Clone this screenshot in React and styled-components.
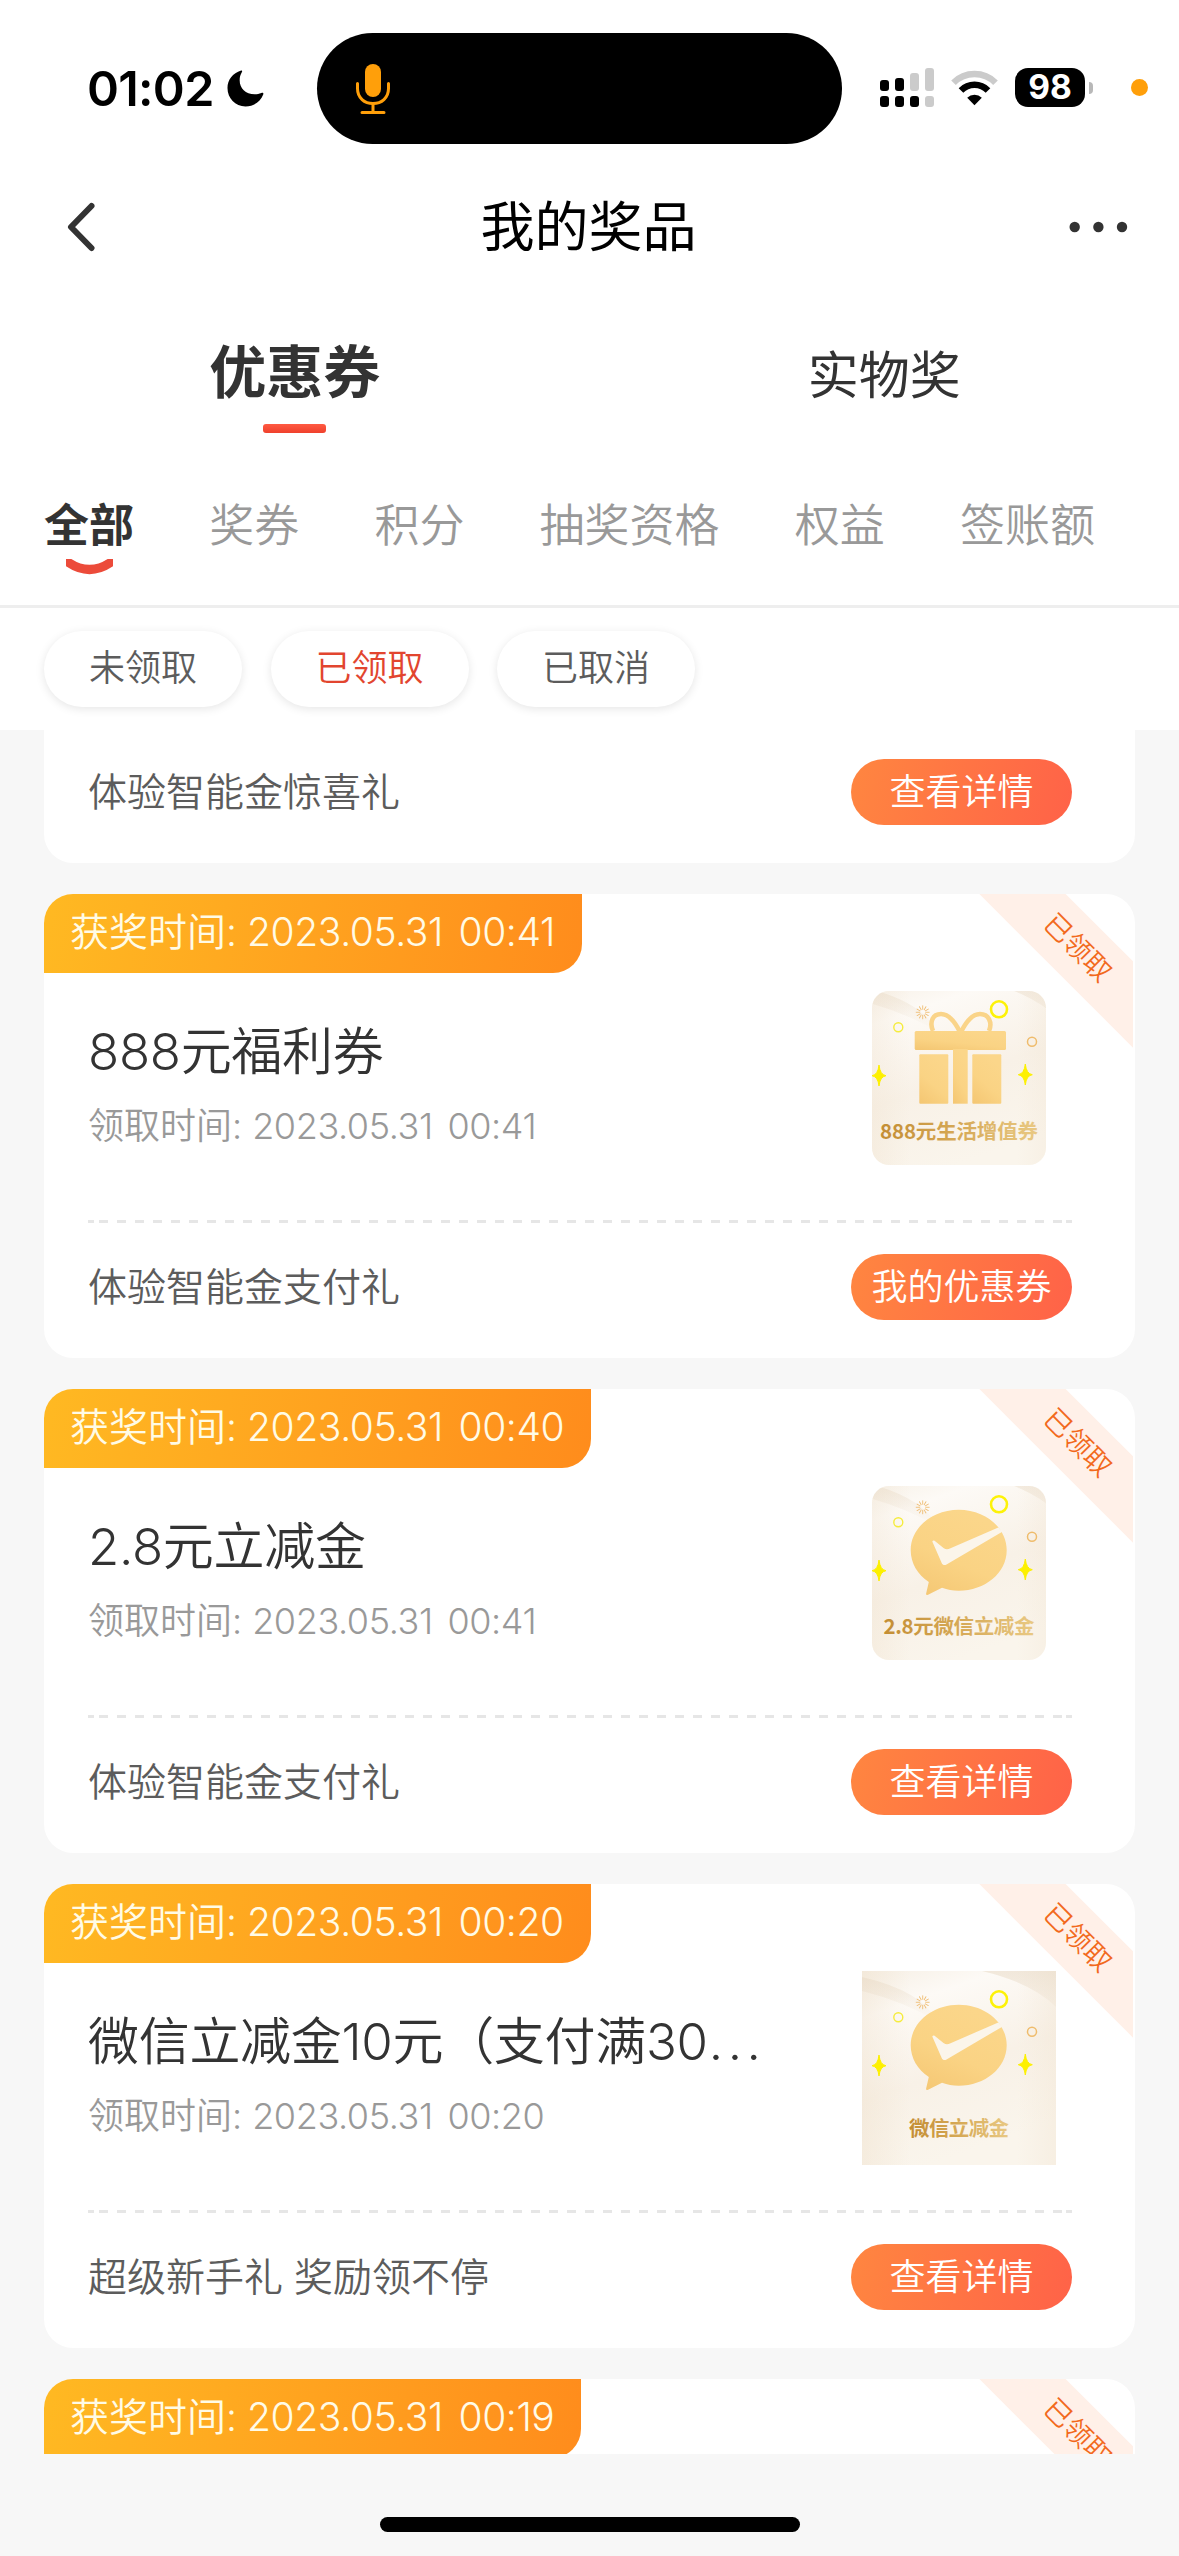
import { useId, useState } from "react";
import styled, { createGlobalStyle } from "styled-components";

const GlobalStyle = createGlobalStyle`
    * {
        box-sizing: border-box;
    }
    body {
        margin: 0;
        background-color: #f7f7f7;
        font-family: Inter, "Noto Sans CJK SC", sans-serif;
    }
    button {
        border: 0;
        padding: 0;
        background: none;
        font: inherit;
    }
`

const Page = styled.div`
    width: 1179px;
    height: 2556px;
    overflow: hidden;
    display: flex;
    flex-direction: column;
    background-color: #f7f7f7;
`

/* ---------- status bar ---------- */
const StatusBar = styled.div`
    height: 161px;
    padding-top: 33px;
    display: flex;
    align-items: flex-start;
    background-color: #fff;
`
const StatusLeft = styled.div`
    width: 317px;
    height: 111px;
    padding-left: 87px;
    display: flex;
    align-items: center;
    gap: 13px;
`
const Clock = styled.span`
    width: 127px;
    font-size: 48.5px;
    font-weight: 600;
    letter-spacing: -0.7px;
    white-space: nowrap;
    color: #000;
`
const Island = styled.div`
    width: 525px;
    height: 111px;
    padding-left: 38px;
    display: flex;
    align-items: center;
    border-radius: 56px;
    background-color: #000;
`
const StatusRight = styled.div`
    height: 109px;
    padding-left: 38px;
    display: flex;
    align-items: center;
`
const Battery = styled.div`
    width: 70px;
    height: 39px;
    margin-left: 17px;
    border-radius: 13px;
    background-color: #000;
    color: #fff;
    font-size: 33.5px;
    font-weight: 650;
    line-height: 39px;
    text-align: center;
`
const BatteryCap = styled.div`
    width: 4px;
    height: 12px;
    margin-left: 4px;
    border-radius: 0 4px 4px 0;
    background-color: #b8b8b8;
`
const MicDot = styled.div`
    width: 17px;
    height: 17px;
    margin-left: 38px;
    border-radius: 50%;
    background-color: #ff9f0a;
`

/* ---------- nav ---------- */
const NavBar = styled.div`
    height: 132px;
    padding: 0 49px 0 66px;
    display: flex;
    align-items: center;
    justify-content: space-between;
    background-color: #fff;
`
const NavSide = styled.button`
    width: 64px;
    height: 64px;
    display: flex;
    align-items: center;
    justify-content: ${props => props.$end ? "flex-end" : "flex-start"};
`
const NavTitle = styled.h1`
    margin: 2px 19px 0 0;
    font-size: 54px;
    font-weight: 400;
    line-height: 64px;
    color: #000;
`

/* ---------- tabs ---------- */
const MainTabs = styled.div`
    height: 183px;
    padding-top: 40px;
    display: grid;
    grid-template-columns: 1fr 1fr;
    background-color: #fff;
`
const MainTab = styled.button`
    display: flex;
    flex-direction: column;
    align-items: center;
    gap: 11px;
    color: #333;
    font-size: ${props => props.$active ? "57px" : "51px"};
    font-weight: ${props => props.$active ? 600 : 400};
    line-height: ${props => props.$active ? "80px" : "85px"};
`
const MainTabLine = styled.div`
    width: 63px;
    height: 9px;
    border-radius: 3px;
    background: linear-gradient(180deg, #ff5a42, #ef402c);
`
const SubTabs = styled.div`
    height: 132px;
    padding: 20px 0 0 44px;
    display: flex;
    align-items: flex-start;
    gap: 75.2px;
    background-color: #fff;
    border-bottom: 3px solid #eeeeee;
`
const SubTab = styled.button`
    display: flex;
    flex-direction: column;
    align-items: center;
    gap: 3px;
    font-size: 45px;
    line-height: 60px;
    white-space: nowrap;
    font-weight: ${props => props.$active ? 600 : 350};
    color: ${props => props.$active ? "#333" : "#999"};
`

/* ---------- filter pills ---------- */
const Filters = styled.div`
    height: 122px;
    padding: 23px 0 0 44px;
    display: flex;
    align-items: flex-start;
    gap: 28.5px;
    background-color: #fff;
`
const Pill = styled.button`
    width: 198px;
    height: 76px;
    padding-bottom: 9px;
    border-radius: 38px;
    background-color: #fff;
    box-shadow: 0 2px 10px rgba(0, 0, 0, 0.1);
    font-size: 36px;
    font-weight: 350;
    color: ${props => props.$active ? "#e2452f" : "#5c5c5c"};
`

/* ---------- list ---------- */
const List = styled.div`
    height: 1724px;
    padding: 0 44px;
    overflow: hidden;
    display: flex;
    flex-direction: column;
    gap: 31px;
`
const Card = styled.div`
    position: relative;
    flex-shrink: 0;
    height: 464px;
    overflow: hidden;
    display: flex;
    flex-direction: column;
    align-items: flex-start;
    border-radius: 29px;
    background-color: #fff;
`
const TopCard = styled(Card)`
    height: 133px;
    justify-content: flex-end;
    border-radius: 0 0 29px 29px;
`
const BottomCard = styled(Card)`
    height: 75px;
    border-radius: 29px 29px 0 0;
`
const WonTag = styled.div`
    height: 79px;
    flex-shrink: 0;
    padding: 0 27px 0 26px;
    display: flex;
    gap: 10px;
    border-radius: 0 0 29px 0;
    background: linear-gradient(100deg, #ffb922, #ff8c1c);
    color: #fffbe6;
    font-size: 39px;
    font-weight: 350;
    line-height: 76px;
    white-space: nowrap;
`
const DateText = styled.span`
    letter-spacing: -0.4px;
    word-spacing: 5px;
`
const Body = styled.div`
    width: 100%;
    height: 247px;
    padding: 8px 79px 0 44px;
    display: flex;
    justify-content: space-between;
`
const Info = styled.div`
    padding-top: 41px;
    display: flex;
    flex-direction: column;
    gap: 22px;
`
const CardTitle = styled.div`
    font-size: 51px;
    font-weight: 350;
    line-height: 60px;
    letter-spacing: -0.3px;
    white-space: nowrap;
    color: #333;
`
const Dots = styled.span`
    margin-left: 1px;
    letter-spacing: 4.5px;
`
const CardTime = styled.div`
    display: flex;
    gap: 10px;
    font-size: 36px;
    font-weight: 350;
    line-height: 44px;
    white-space: nowrap;
    color: #999;
`
const Thumb = styled.svg`
    width: 194px;
    height: 194px;
    flex-shrink: 0;
    clip-path: ${props => props.$rounded ? "inset(10px round 17px)" : "none"};
`
const Dashes = styled.div`
    width: 984px;
    height: 3px;
    margin: 0 0 31px 44px;
    background:
        linear-gradient(#e6e6e6, #e6e6e6) left / 6px 3px no-repeat,
        linear-gradient(#e6e6e6, #e6e6e6) right / 6px 3px no-repeat,
        repeating-linear-gradient(90deg, #e6e6e6 0 9px, #fff 9px 18px) 11px 0 / 963px 3px no-repeat;
`
const Footer = styled.div`
    width: 100%;
    height: 104px;
    padding: 0 63px 38px 44px;
    display: flex;
    align-items: center;
    justify-content: space-between;
`
const Source = styled.span`
    padding-bottom: 6px;
    font-size: 39px;
    font-weight: 350;
    color: #5c5c5c;
`
const CardBtn = styled.button`
    width: 221px;
    height: 66px;
    padding-bottom: 7px;
    border-radius: 33px;
    background: linear-gradient(105deg, #ff8640, #ff6248);
    color: #fff;
    font-size: 36px;
    font-weight: 350;
    white-space: nowrap;
`
const RibbonCorner = styled.div`
    position: absolute;
    top: 0;
    right: 2px;
    width: 154px;
    height: 154px;
    overflow: hidden;
`
const Ribbon = styled.div`
    position: absolute;
    left: -31px;
    top: 24.5px;
    width: 260px;
    height: 61px;
    padding-right: 3px;
    transform: rotate(45deg);
    background-color: #fff0e8;
    color: #f2691c;
    font-size: 27.5px;
    font-weight: 350;
    line-height: 59px;
    text-align: center;
`
const HomeBar = styled.div`
    width: 420px;
    height: 15px;
    margin: 63px auto 0;
    border-radius: 8px;
    background-color: #000;
`
const WifiSvg = styled.svg`
    margin-left: 17px;
`

function Moon() {
    return (
        <svg width="37" height="37" viewBox="0 0 38 38">
            <path d="M14.5 .5C5.8 3.2 .5 10 .5 18.5C.5 29 8.5 37.5 19 37.5C27.5 37.5 34.3 32.5 37.2 25.2C37.8 23.6 36.7 23 35.3 23.6C33 24.6 31 25 28.5 25C19 25 13 18.8 13 10.5C13 7.5 13.7 5.2 15.2 2.4C16 .8 15.6 .2 14.5 .5Z" />
        </svg>
    )
}

function Mic() {
    return (
        <svg width="36" height="52" viewBox="0 0 36 52" fill="none" stroke="#ff9f0a" strokeWidth="3" strokeLinecap="round">
            <rect x="10" y="1" width="16" height="33" rx="8" fill="#ff9f0a" stroke="none" />
            <path d="M2.5 20.5V25.5C2.5 35 9.5 40.5 18 40.5S33.5 35 33.5 25.5V20.5" />
            <path d="M18 41V49M7 49.5H29" />
        </svg>
    )
}

function Signal() {
    return (
        <svg width="54" height="39" viewBox="0 0 54 39">
            <rect x="0" y="12" width="9" height="11" rx="3" />
            <rect x="15" y="10" width="9" height="13" rx="3" />
            <rect x="30" y="5" width="9" height="18" rx="3" fill="#cbcbcb" />
            <rect x="45" y="0" width="9" height="23" rx="3" fill="#cbcbcb" />
            <rect x="0" y="28" width="9" height="11" rx="3" />
            <rect x="15" y="28" width="9" height="11" rx="3" />
            <rect x="30" y="28" width="9" height="11" rx="3" />
            <rect x="45" y="28" width="9" height="11" rx="3" fill="#cbcbcb" />
        </svg>
    )
}

function Wifi() {
    return (
        <WifiSvg width="47" height="36" viewBox="0 0 47 36" fill="none" strokeWidth="6.5">
            <path d="M2.5 12.7A29.7 29.7 0 0 1 44.5 12.7" stroke="#cbcbcb" />
            <path d="M10 20.5A19 19 0 0 1 37 20.5" stroke="#000" />
            <path d="M23.5 35.2L16.2 27.8A10.4 10.4 0 0 1 30.8 27.8Z" fill="#000" />
        </WifiSvg>
    )
}

function Sparkles() {
    const rays = [0, 30, 60, 90, 120, 150, 180, 210, 240, 270, 300, 330]
    return (
        <>
            <circle cx="137" cy="28.3" r="8" fill="none" stroke="#fdf208" strokeWidth="2.6" />
            <circle cx="36.3" cy="46.3" r="4.5" fill="none" stroke="#f5ec3c" strokeWidth="1.4" />
            <circle cx="170" cy="60.7" r="4.5" fill="none" stroke="#efbc6c" strokeWidth="1.5" />
            {rays.map(deg => (
                <path key={deg} d="M60.7 28.3V24.8" stroke="#efbd74" strokeWidth="0.9" strokeLinecap="round"
                    transform={`rotate(${deg} 60.7 31.3)`} />
            ))}
            <path d="M17 84Q18 93.7 24 94.7Q18 95.7 17 105Q16 95.7 10 94.7Q16 93.7 17 84Z" fill="#fdf000" stroke="#fdf000" />
            <path d="M163.3 83Q164.3 92.7 170.3 93.7Q164.3 94.7 163.3 104Q162.3 94.7 156.3 93.7Q162.3 92.7 163.3 83Z" fill="#fdf000" stroke="#fdf000" />
        </>
    )
}

function GiftArt({ fill }) {
    return (
        <g fill={fill}>
            <path d="M98 51C94 43 88 33 79 33C70 33 67.5 42 71 50M99 51C103 43 109 33 118 33C127 33 130.5 42 127 50"
                fill="none" stroke="#fad489" strokeWidth="4.6" />
            <rect x="52.7" y="50" width="91.3" height="19" rx="1.5" />
            <rect x="57.3" y="73.3" width="29" height="49.4" rx="1" />
            <rect x="91" y="68" width="14.7" height="54.7" />
            <rect x="110.3" y="73.3" width="29" height="49.4" rx="1" />
        </g>
    )
}

function BubbleArt({ fill }) {
    return (
        <>
            <path d="M96.7 33.7C123 33.7 144.7 51.5 144.7 74.2S123 114.7 96.7 114.7C90.5 114.7 85.5 113.8 80 111.8L66 118.8C64.5 119.5 63.8 118.8 64.2 117.3L66.8 106C55.5 98.5 48.7 87 48.7 74.2C48.7 51.5 70.5 33.7 96.7 33.7Z" fill={fill} />
            <path d="M70.3 65.5C71 64 72.5 64.5 73.5 65.5L81.5 72C84 73.8 86 73.5 88.5 72.2L136.3 51.5L140.3 55.7L84.5 88.5C82.5 89.7 80.5 88.8 79.8 87.2Z" fill="#fbf5ea" />
        </>
    )
}

function PrizeArt({ kind, caption, captionY, captionWidth, rounded }) {
    const id = useId().replace(/[^a-zA-Z0-9]/g, "")
    return (
        <Thumb viewBox="0 0 194 194" $rounded={rounded}>
            <defs>
                <linearGradient id={`bg${id}`} x1="0" y1="0" x2=".35" y2="1">
                    <stop offset="0" stopColor="#f6efe4" />
                    <stop offset=".22" stopColor="#fdfaf6" />
                    <stop offset=".6" stopColor="#f8f1e7" />
                    <stop offset="1" stopColor="#faf5ec" />
                </linearGradient>
                <linearGradient id={`edge${id}`} x1="0" y1="0" x2="1" y2="0">
                    <stop offset="0" stopColor="#efe0cb" stopOpacity=".4" />
                    <stop offset=".25" stopColor="#efe0cb" stopOpacity="0" />
                    <stop offset=".8" stopColor="#efe0cb" stopOpacity="0" />
                    <stop offset="1" stopColor="#efe0cb" stopOpacity=".3" />
                </linearGradient>
                <linearGradient id={`gold${id}`} x1="0" y1="1" x2=".5" y2="0">
                    <stop offset="0" stopColor="#f4c672" />
                    <stop offset=".5" stopColor="#fad384" />
                    <stop offset="1" stopColor="#fbd68a" />
                </linearGradient>
                <linearGradient id={`cap${id}`} x1="0" y1="0" x2="1" y2="0">
                    <stop offset="0" stopColor="#c38d34" />
                    <stop offset=".5" stopColor="#d6a956" />
                    <stop offset="1" stopColor="#e9c984" />
                </linearGradient>
                <linearGradient id={`sheen${id}`} x1="0" y1="0" x2="0" y2="1">
                    <stop offset="0" stopColor="#e6d6c0" stopOpacity=".5" />
                    <stop offset="1" stopColor="#e6d6c0" stopOpacity="0" />
                </linearGradient>
            </defs>
            <rect width="194" height="194" fill={`url(#bg${id})`} />
            <rect width="194" height="194" fill={`url(#edge${id})`} />
            <path d="M0 6Q60 20 75 50Q40 30 0 20ZM120 0H194V36Q170 12 120 0Z" fill={`url(#sheen${id})`} />
            <Sparkles />
            {kind === "gift" ? <GiftArt fill={`url(#gold${id})`} /> : <BubbleArt fill={`url(#gold${id})`} />}
            <text x="97" y={captionY} textAnchor="middle" textLength={captionWidth} fontSize="20.5" fontWeight="700"
                fontFamily='"Noto Sans CJK SC", sans-serif' fill={`url(#cap${id})`}>{caption}</text>
        </Thumb>
    )
}

function CardHead({ won }) {
    return (
        <>
            <WonTag>
                <span>获奖时间:</span>
                <DateText>{won}</DateText>
            </WonTag>
            <RibbonCorner>
                <Ribbon>已领取</Ribbon>
            </RibbonCorner>
        </>
    )
}

function CardFoot({ source, action }) {
    return (
        <Footer>
            <Source>{source}</Source>
            <CardBtn>{action}</CardBtn>
        </Footer>
    )
}

function PrizeCard({ prize }) {
    return (
        <Card>
            <CardHead won={prize.won} />
            <Body>
                <Info>
                    <CardTitle>
                        {prize.title}
                        {prize.long ? <Dots>...</Dots> : <></>}
                    </CardTitle>
                    <CardTime>
                        <span>领取时间:</span>
                        <DateText>{prize.received}</DateText>
                    </CardTime>
                </Info>
                <PrizeArt {...prize.art} />
            </Body>
            <Dashes />
            <CardFoot source={prize.source} action={prize.action} />
        </Card>
    )
}

const prizes = [
    {
        won: "2023.05.31 00:41",
        title: "888元福利券",
        received: "2023.05.31 00:41",
        source: "体验智能金支付礼",
        action: "我的优惠券",
        art: { kind: "gift", caption: "888元生活增值券", captionY: 157.5, captionWidth: 158, rounded: true },
    },
    {
        won: "2023.05.31 00:40",
        title: "2.8元立减金",
        received: "2023.05.31 00:41",
        source: "体验智能金支付礼",
        action: "查看详情",
        art: { kind: "bubble", caption: "2.8元微信立减金", captionY: 157.5, captionWidth: 151, rounded: true },
    },
    {
        won: "2023.05.31 00:20",
        title: "微信立减金10元（支付满30",
        long: true,
        received: "2023.05.31 00:20",
        source: "超级新手礼 奖励领不停",
        action: "查看详情",
        art: { kind: "bubble", caption: "微信立减金", captionY: 165, captionWidth: 100, rounded: false },
    },
]

const subTabs = ["全部", "奖券", "积分", "抽奖资格", "权益", "签账额"]
const filters = ["未领取", "已领取", "已取消"]

export default function App() {
    const [mainTab, setMainTab] = useState("优惠券")
    const [subTab, setSubTab] = useState("全部")
    const [filter, setFilter] = useState("已领取")

    return (
        <>
        <GlobalStyle />
        <Page>
            <StatusBar>
                <StatusLeft>
                    <Clock>01:02</Clock>
                    <Moon />
                </StatusLeft>
                <Island>
                    <Mic />
                </Island>
                <StatusRight>
                    <Signal />
                    <Wifi />
                    <Battery>98</Battery>
                    <BatteryCap />
                    <MicDot />
                </StatusRight>
            </StatusBar>

            <NavBar>
                <NavSide>
                    <svg width="30" height="50" viewBox="0 0 30 50" fill="none" stroke="#333" strokeWidth="6" strokeLinecap="round" strokeLinejoin="round">
                        <path d="M25.5 4L5 25L25.5 46" />
                    </svg>
                </NavSide>
                <NavTitle>我的奖品</NavTitle>
                <NavSide $end>
                    <svg width="64" height="12" viewBox="0 0 64 12" fill="#333">
                        <circle cx="8.7" cy="6" r="5.2" />
                        <circle cx="32.4" cy="6" r="5.2" />
                        <circle cx="56" cy="6" r="5.2" />
                    </svg>
                </NavSide>
            </NavBar>

            <MainTabs>
                {["优惠券", "实物奖"].map(name => (
                    <MainTab key={name} $active={name === mainTab} onClick={() => setMainTab(name)}>
                        {name}
                        {name === mainTab ? <MainTabLine /> : <></>}
                    </MainTab>
                ))}
            </MainTabs>

            <SubTabs>
                {subTabs.map(name => (
                    <SubTab key={name} $active={name === subTab} onClick={() => setSubTab(name)}>
                        {name}
                        {name === subTab ?
                            <svg width="47" height="16" viewBox="0 0 47 16">
                                <path d="M-1 1Q23.5 20 48 1" fill="none" stroke="#ec4b3a" strokeWidth="9" />
                            </svg>
                            : <></>}
                    </SubTab>
                ))}
            </SubTabs>

            <Filters>
                {filters.map(name => (
                    <Pill key={name} $active={name === filter} onClick={() => setFilter(name)}>{name}</Pill>
                ))}
            </Filters>

            <List>
                {/* tail of the card scrolled under the filters */}
                <TopCard>
                    <CardFoot source="体验智能金惊喜礼" action="查看详情" />
                </TopCard>
                {prizes.map(prize => (
                    <PrizeCard key={prize.won} prize={prize} />
                ))}
                {/* only the head of the next card is in view */}
                <BottomCard>
                    <CardHead won="2023.05.31 00:19" />
                </BottomCard>
            </List>

            <HomeBar />
        </Page>
        </>
    )
}
